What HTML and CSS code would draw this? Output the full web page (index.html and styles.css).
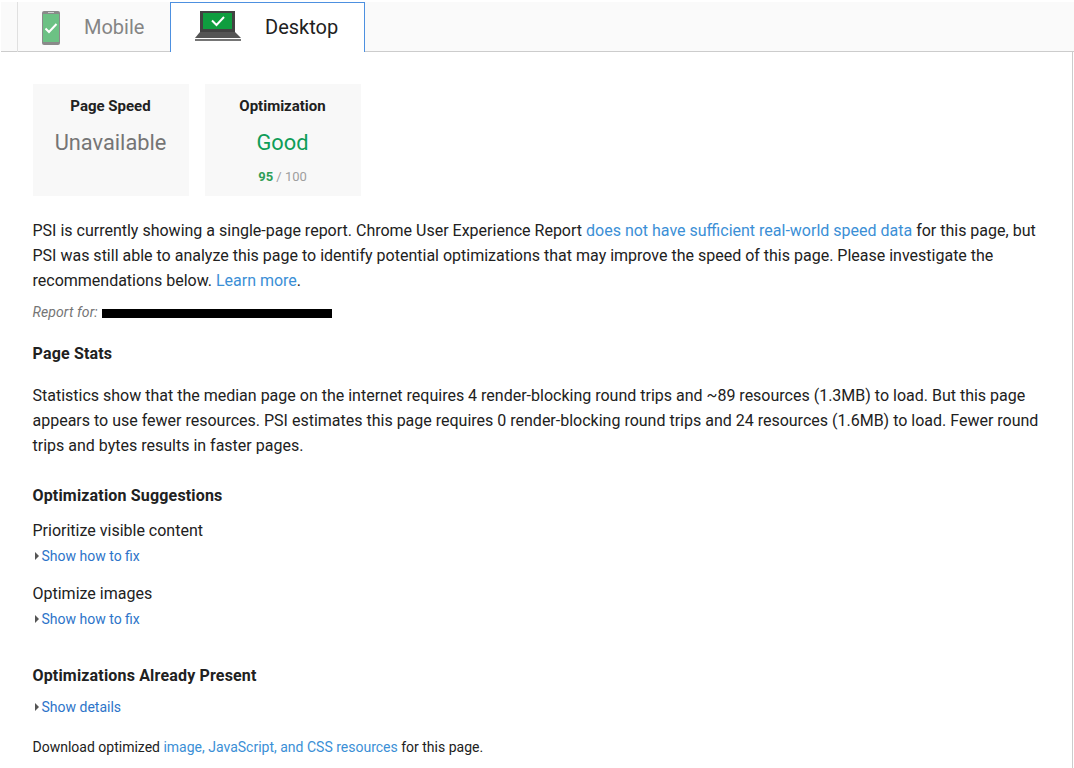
FILE: index.html
```html
<!DOCTYPE html>
<html lang="en">
<head>
  <meta charset="UTF-8" />
  <title>PageSpeed Insights</title>
  <link rel="stylesheet" href="styles.css">
</head>
<body>

  <div class="tabs">
    <div class="tab tab-mobile">
      <svg class="icon-phone" width="18" height="34" viewBox="0 0 18 34">
        <rect x="0" y="0" width="18" height="34" rx="2" fill="#8a8a8a"/>
        <rect x="1" y="3" width="16" height="28" fill="#6cc184"/>
        <rect x="6" y="1" width="6" height="1" fill="#d0d0d0"/>
        <path d="M3.5 17.5l3.5 3.5 7.5-8" fill="none" stroke="#fff" stroke-width="2"/>
      </svg>
      <span>Mobile</span>
    </div>
    <div class="tab tab-desktop">
      <svg class="icon-laptop" width="46" height="31" viewBox="0 0 46 31">
        <rect x="5" y="0" width="35" height="22" fill="#424242"/>
        <rect x="8" y="2" width="29" height="16" fill="#0f9d3f"/>
        <path d="M17 9.5l4.5 4.5 7.5-8" fill="none" stroke="#fff" stroke-width="2"/>
        <path d="M5 21h35l6 6H0z" fill="#555"/>
        <rect x="0" y="28" width="46" height="2" fill="#757575"/>
      </svg>
      <span>Desktop</span>
    </div>
  </div>

  <div class="content">
    <div class="scores">
      <div class="score">
        <h3>Page Speed</h3>
        <div class="score-value">Unavailable</div>
      </div>
      <div class="score">
        <h3>Optimization</h3>
        <div class="score-value good">Good</div>
        <div class="score-num"><b>95</b> / 100</div>
      </div>
    </div>

    <p class="intro">PSI is currently showing a single-page report. Chrome User Experience Report <a href="#">does not have sufficient real-world speed data</a> for this page, but PSI was still able to analyze this page to identify potential optimizations that may improve the speed of this page. Please investigate the recommendations below. <a href="#">Learn more</a>.</p>

    <div class="report-for">Report for: <span class="redacted"></span></div>

    <h4 class="stats-title">Page Stats</h4>
    <p class="stats">Statistics show that the median page on the internet requires 4 render-blocking round trips and ~89 resources (1.3MB) to load. But this page appears to use fewer resources. PSI estimates this page requires 0 render-blocking round trips and 24 resources (1.6MB) to load. Fewer round trips and bytes results in faster pages.</p>

    <h4 class="suggest-title">Optimization Suggestions</h4>
    <div class="rule">Prioritize visible content</div>
    <a class="toggle" href="#">Show how to fix</a>
    <div class="rule">Optimize images</div>
    <a class="toggle" href="#">Show how to fix</a>

    <h4 class="present-title">Optimizations Already Present</h4>
    <a class="toggle" href="#">Show details</a>

    <p class="download">Download optimized <a href="#">image, JavaScript, and CSS resources</a> for this page.</p>
  </div>

</body>
</html>
```

FILE: styles.css
```css
html, body {
  height: 100%;
}
body {
  margin: 0;
  font-family: Roboto, sans-serif;
  font-size: 16px;
  line-height: 25px;
  color: #212121;
  background: #fff;
  overflow: hidden;
}
a {
  color: #3b8fd6;
  text-decoration: none;
}

.tabs {
  display: flex;
  height: 49px;
  margin: 2px 0 0 1px;
  padding-left: 16px;
  background: #fafafa;
  border-bottom: 1px solid #ccc;
}
.tab {
  display: flex;
  align-items: center;
  font-size: 20px;
  box-sizing: border-box;
  height: 50px;
}
.tab-mobile {
  width: 153px;
  padding-left: 24px;
  border-left: 1px solid #e0e0e0;
  color: #858585;
}
.tab-mobile span {
  margin-left: 24px;
}
.tab-desktop {
  width: 195px;
  padding-left: 24px;
  background: #fff;
  border: 1px solid #4d90e0;
  border-bottom: 0;
  color: #212121;
}
.tab-desktop span {
  margin-left: 24px;
}
.icon-phone {
  margin-top: 1px;
}
.icon-laptop {
  margin-top: -2px;
}

.content {
  height: 716px;
  margin-right: 1px;
  padding: 32px 32px 0 32.5px;
  border-right: 1px solid #ccc;
  overflow: hidden;
}

.scores {
  display: flex;
  gap: 16px;
}
.score {
  width: 156px;
  height: 112px;
  background: #f8f8f8;
  text-align: center;
}
.score h3 {
  margin: 10px 0 0;
  font-size: 15px;
  line-height: 25px;
  font-weight: 700;
}
.score-value {
  margin-top: 9px;
  font-size: 21.8px;
  line-height: 30px;
  color: #757575;
}
.score-value.good {
  color: #0f9d58;
}
.score-num {
  margin-top: 9px;
  font-size: 13px;
  line-height: 20px;
  color: #9e9e9e;
}
.score-num b {
  color: #2f9e57;
}

p {
  margin: 0;
}
.intro {
  margin-top: 22px;
}
.report-for {
  margin-top: 7px;
  font-size: 14px;
  font-style: italic;
  letter-spacing: 0.1px;
  color: #757575;
}
.redacted {
  display: inline-block;
  width: 230px;
  height: 9px;
  margin-left: 1px;
  background: #000;
  vertical-align: -1px;
}

h4 {
  margin: 0;
  font-size: 16px;
  line-height: 25px;
  font-weight: 700;
  letter-spacing: 0.17px;
}
.stats-title {
  margin-top: 16px;
}
.stats {
  margin-top: 17px;
}
.suggest-title {
  margin-top: 25px;
}
.rule {
  margin-top: 10px;
}
.toggle {
  display: block;
  position: relative;
  padding-left: 9px;
  margin-top: 1px;
  font-size: 14px;
  color: #2d74c9;
}
.toggle::before {
  content: "";
  position: absolute;
  left: 2px;
  top: 8px;
  border-left: 4px solid #555;
  border-top: 4px solid transparent;
  border-bottom: 4px solid transparent;
}
.toggle + .rule {
  margin-top: 12px;
}
.present-title {
  margin-top: 31px;
}
.present-title + .toggle {
  margin-top: 7px;
}
.download {
  margin-top: 15px;
  font-size: 14px;
}
```
